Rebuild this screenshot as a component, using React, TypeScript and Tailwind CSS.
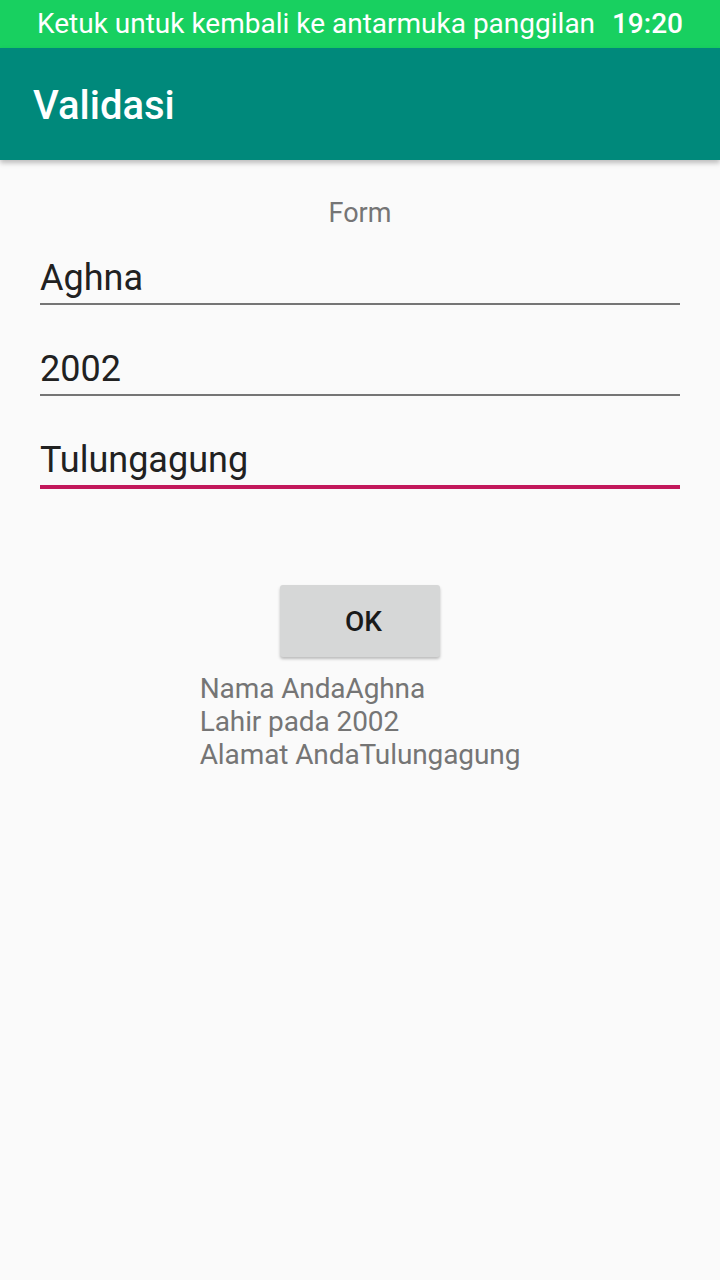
export default function App() {
  return (
    <div
      className="w-[720px] h-[1280px] bg-[#fafafa] flex flex-col"
      style={{ fontFamily: "Roboto, 'Liberation Sans', sans-serif" }}
    >
      {/* status bar */}
      <div className="h-[48px] bg-[#18d060] flex items-center text-white">
        <span className="ml-[37px] text-[28px] leading-none">
          Ketuk untuk kembali ke antarmuka panggilan
        </span>
        <span className="ml-auto mr-[37px] text-[28px] leading-none font-medium">19:20</span>
      </div>

      {/* toolbar */}
      <div className="h-[112px] bg-[#00897b] flex items-center px-[33px] pt-[4px] shadow-[0_3px_5px_rgba(0,0,0,0.25)] relative z-10">
        <span className="text-white text-[40px] font-medium">Validasi</span>
      </div>

      <div className="mt-[37px] h-[33px] text-center text-[#757575] text-[27px] leading-[33px]">Form</div>

      <div className="mx-[40px]">
        <div className="mt-[27px]">
          <div className="h-[42px] leading-[42px] text-[36px] text-[#212121]">Aghna</div>
          <div className="mt-[4px] h-[2px] bg-[#757575]" />
        </div>
        <div className="mt-[43px]">
          <div className="h-[42px] leading-[42px] text-[36px] text-[#212121]">2002</div>
          <div className="mt-[4px] h-[2px] bg-[#757575]" />
        </div>
        <div className="mt-[43px]">
          <div className="h-[42px] leading-[42px] text-[36px] text-[#212121]">Tulungagung</div>
          <div className="mt-[4px] h-[4px] bg-[#c2185b]" />
        </div>
      </div>

      <div className="mt-[96px] flex justify-center">
        <button className="w-[160px] h-[72px] pl-[7px] pt-[2px] bg-[#d6d7d7] rounded-[3px] shadow-[0_2px_3px_rgba(0,0,0,0.25)] text-[28px] font-medium text-[#1a1a1a]">
          OK
        </button>
      </div>

      <div className="mt-[15px] mx-auto w-fit text-[28px] leading-[33px] text-[#757575] tracking-[-0.1px]">
        <div>Nama AndaAghna</div>
        <div>Lahir pada 2002</div>
        <div>Alamat AndaTulungagung</div>
      </div>
    </div>
  );
}
